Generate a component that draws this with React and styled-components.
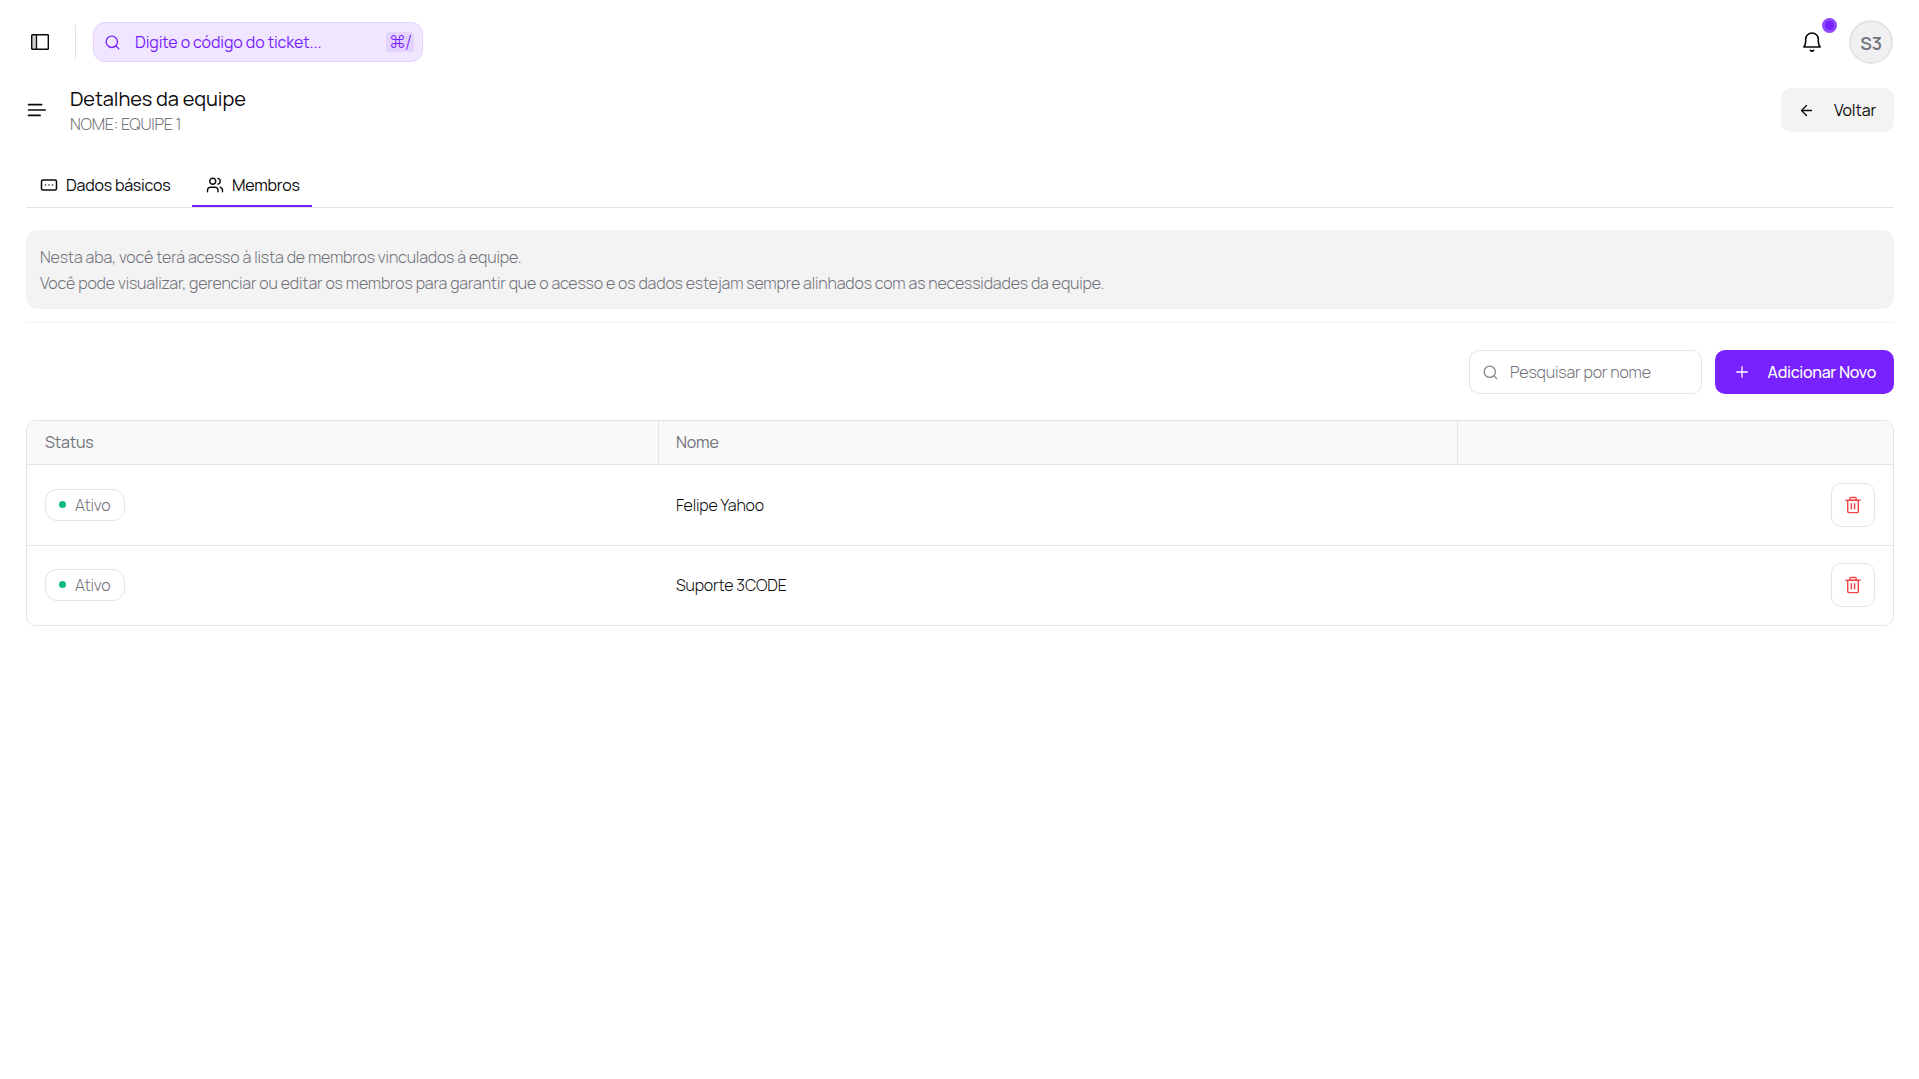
import React from 'react';
import styled, { createGlobalStyle } from 'styled-components';
import { Search, ArrowLeft, Plus, Users } from 'lucide-react';

const GlobalStyle = createGlobalStyle`
  * {
    box-sizing: border-box;
  }

  body {
    margin: 0;
    background-color: #fff;
    color: #0a0a0a;
    font-family: Manrope, Inter, sans-serif;
    font-size: 16px;
    line-height: 24px;
  }

  button, input {
    font: inherit;
    color: inherit;
  }

  svg {
    display: block;
    flex-shrink: 0;
  }
`;

const PageS = styled.div`
  min-height: 100vh;
  padding: 20px 25px 0 26px;
`;

const TopBarS = styled.header`
  display: flex;
  align-items: center;
  height: 44px;
`;

const SidebarToggleS = styled.button`
  display: flex;
  padding: 0;
  margin-left: 4px;
  border: none;
  background: none;
`;

const DividerS = styled.span`
  width: 1px;
  height: 35px;
  margin: 0 17px 0 25px;
  background-color: #e4e4e7;
`;

const TicketSearchS = styled.div`
  display: flex;
  align-items: center;
  gap: 14px;
  width: 330px;
  height: 40px;
  padding: 0 8px 0 10px;
  border: 1px solid #e4d3ff;
  border-radius: 12px;
  background-color: #f0e6ff;
  color: #7722ff;
`;

const TextS = styled.span`
  font-size: ${({ $size }) => $size || 16}px;
  font-weight: ${({ $weight }) => $weight || 400};
  letter-spacing: ${({ $spacing }) => $spacing || -0.16}px;
  white-space: nowrap;
`;

const ShortcutS = styled.kbd`
  display: flex;
  align-items: center;
  justify-content: center;
  width: 28px;
  height: 20px;
  padding-bottom: 1px;
  margin-left: auto;
  border-radius: 4px;
  background-color: #e4d3ff;
  font: 300 17px Inter, 'DejaVu Sans', sans-serif;
  letter-spacing: -0.5px;
`;

const BellButtonS = styled.button`
  position: relative;
  display: flex;
  padding: 0;
  margin: 0 26px 0 auto;
  border: none;
  background: none;
`;

const BellDotS = styled.span`
  position: absolute;
  top: -13px;
  right: -14px;
  display: flex;
  align-items: center;
  justify-content: center;
  width: 15px;
  height: 15px;
  border-radius: 50%;
  background-color: #8f47ff;

  &::after {
    content: '';
    width: 9px;
    height: 9px;
    border-radius: 50%;
    background-color: #7722ff;
  }
`;

const AvatarS = styled.div`
  display: flex;
  align-items: center;
  justify-content: center;
  width: 44px;
  height: 44px;
  padding-top: 1px;
  margin-right: 1px;
  border: 2px solid #e4e4e7;
  border-radius: 50%;
  background-color: #f0f0f2;
  color: #71717a;
`;

const PageHeaderS = styled.div`
  display: flex;
  align-items: center;
  height: 44px;
  margin-top: 24px;
`;

const HeadingS = styled.div`
  display: flex;
  flex-direction: column;
  padding-top: 1px;
  margin: 0 auto 0 23px;
`;

const TitleS = styled.h1`
  margin: 0;
  font-size: 20px;
  font-weight: 400;
  line-height: 27px;
  letter-spacing: -0.1px;
`;

const SubtitleS = styled.p`
  margin: 0;
  color: #71717a;
  font-size: 16px;
  font-weight: 300;
  line-height: 24px;
  letter-spacing: -0.24px;
`;

const ButtonS = styled.button`
  display: flex;
  align-items: center;
  justify-content: space-between;
  width: ${({ $width }) => $width}px;
  height: 44px;
  padding: 0 18px 0 ${({ $primary }) => ($primary ? 18 : 17)}px;
  border: none;
  border-radius: 10px;
  background-color: ${({ $primary }) => ($primary ? '#7722ff' : '#f3f3f3')};
  color: ${({ $primary }) => ($primary ? '#fff' : '#0a0a0a')};

  span {
    padding-bottom: 1px;
  }
`;

const TabsS = styled.nav`
  display: flex;
  height: 46px;
  margin-top: 30px;
  border-bottom: 1px solid #e4e4e7;
`;

const TabS = styled.button`
  display: flex;
  align-items: center;
  gap: 8px;
  width: ${({ $width }) => $width}px;
  height: 45px;
  padding: 2px 14px 0;
  margin-right: 8px;
  border: none;
  border-bottom: 2px solid ${({ $active }) => ($active ? '#7722ff' : 'transparent')};
  background: none;
`;

const InfoS = styled.section`
  display: flex;
  flex-direction: column;
  height: 79px;
  margin-top: 22px;
  padding: 14px;
  border-radius: 12px;
  background-color: #f3f3f3;
  color: #71717a;
  line-height: 26px;
`;

const SeparatorS = styled.div`
  height: 1px;
  margin-top: 13px;
  background-color: #f3f3f3;
`;

const ToolbarS = styled.div`
  display: flex;
  justify-content: flex-end;
  gap: 13px;
  margin-top: 27px;
`;

const NameSearchS = styled.label`
  display: flex;
  align-items: center;
  gap: 11px;
  width: 233px;
  height: 44px;
  padding: 0 12px;
  border: 1px solid #e4e4e7;
  border-radius: 10px;
  color: #85858d;
`;

const NameInputS = styled.input`
  width: 100%;
  padding: 0 0 1px;
  border: none;
  outline: none;
  background: none;
  font-size: 16px;
  font-weight: 300;
  letter-spacing: -0.16px;

  &::placeholder {
    color: #71717a;
    opacity: 1;
  }
`;

const TableS = styled.div`
  margin-top: 26px;
  border: 1px solid #e4e4e7;
  border-radius: 10px;
  overflow: hidden;
`;

const RowS = styled.div`
  display: grid;
  grid-template-columns: 632px 799px 1fr;
  height: ${({ $head }) => ($head ? 44 : 81)}px;
  border-bottom: 1px solid #e4e4e7;

  &:last-child {
    height: 79px;
    padding-bottom: 1px;
    border-bottom: none;
  }
`;

const CellS = styled.div`
  display: flex;
  align-items: center;
  justify-content: ${({ $end }) => ($end ? 'flex-end' : 'flex-start')};
  padding: 0 18px;

  & + & {
    padding-left: 17px;
  }

  > span {
    margin-bottom: 1px;
  }
`;

const HeadCellS = styled(CellS)`
  border-right: 1px solid #e4e4e7;
  background-color: #f9f9f9;
  color: #71717a;

  &:last-child {
    border-right: none;
  }
`;

const StatusS = styled.span`
  display: flex;
  align-items: center;
  gap: 9px;
  width: 80px;
  height: 32px;
  padding: 0 13px;
  border: 1px solid #e4e4e7;
  border-radius: 12px;
  color: #71717a;

  &::before {
    content: '';
    width: 7px;
    height: 7px;
    border-radius: 50%;
    background-color: #10b981;
  }
`;

const DeleteButtonS = styled.button`
  display: flex;
  align-items: center;
  justify-content: center;
  width: 44px;
  height: 44px;
  padding: 0;
  border: 1px solid #e4e4e7;
  border-radius: 10px;
  background-color: #fff;
  color: #ef4444;
`;

const members = ['Felipe Yahoo', 'Suporte 3CODE'];

const SidebarIcon = () => (
  <svg width="20" height="20" viewBox="0 0 20 20" fill="none">
    <path d="M2 3h5v14H2z" fill="#0a0a0a" opacity="0.2" />
    <rect x="1.7" y="2.7" width="16.6" height="14.6" rx="0.6" stroke="#0a0a0a" strokeWidth="1.4" />
    <path d="M6.5 3v14" stroke="#0a0a0a" strokeWidth="1.3" />
  </svg>
);

const BellIcon = () => (
  <svg width="22" height="22" viewBox="0 0 22 22" fill="none" stroke="#0a0a0a" strokeWidth="1.6" strokeLinecap="round" strokeLinejoin="round">
    <path d="M2.8 16h16.4c-1.5-1.7-1.9-3.3-1.9-5.4V8.2C17.3 4.7 14.5 2 11 2S4.7 4.7 4.7 8.2v2.4c0 2.1-.4 3.7-1.9 5.4Z" />
    <path d="M9.3 19.4c1 .8 2.4.8 3.4 0" />
  </svg>
);

const MenuIcon = () => (
  <svg width="21" height="20" viewBox="0 0 21 20" fill="none" stroke="#0a0a0a" strokeWidth="1.7" strokeLinecap="round">
    <path d="M2.6 4.7h13M2.6 10h16.6M2.6 15.4h11.5" />
  </svg>
);

const DataIcon = () => (
  <svg width="18" height="18" viewBox="0 0 18 18" fill="none" stroke="currentColor" strokeWidth="1.5" strokeLinecap="round">
    <rect x="1.5" y="4" width="15" height="10" rx="1.5" />
    <path d="M5.5 9h.01M9 9h.01M12.5 9h.01" />
  </svg>
);

const TrashIcon = () => (
  <svg width="18" height="18" viewBox="0 0 18 18" fill="none" stroke="currentColor" strokeWidth="1.4" strokeLinecap="round" strokeLinejoin="round">
    <path d="M5.8 4V2.4c0-.6.4-1 1-1h4.4c.6 0 1 .4 1 1V4" fill="currentColor" fillOpacity="0.2" />
    <path d="M2 4.2h14M3.7 4.2v11.4c0 .6.4 1 1 1h8.6c.6 0 1-.4 1-1V4.2M7.4 7.8v5M10.6 7.8v5" />
  </svg>
);

const App = () => (
  <>
    <GlobalStyle />
    <PageS>
      <TopBarS>
        <SidebarToggleS aria-label="Menu lateral"><SidebarIcon /></SidebarToggleS>
        <DividerS />
        <TicketSearchS>
          <Search size={17} strokeWidth={1.9} />
          <TextS $spacing={-0.1}>Digite o código do ticket...</TextS>
          <ShortcutS>⌘/</ShortcutS>
        </TicketSearchS>
        <BellButtonS aria-label="Notificações">
          <BellIcon />
          <BellDotS />
        </BellButtonS>
        <AvatarS><TextS $size={18} $weight={600}>S3</TextS></AvatarS>
      </TopBarS>

      <PageHeaderS>
        <MenuIcon />
        <HeadingS>
          <TitleS>Detalhes da equipe</TitleS>
          <SubtitleS>NOME: EQUIPE 1</SubtitleS>
        </HeadingS>
        <ButtonS $width={113}>
          <ArrowLeft size={17} strokeWidth={1.8} />
          <TextS>Voltar</TextS>
        </ButtonS>
      </PageHeaderS>

      <TabsS>
        <TabS $width={158}>
          <DataIcon />
          <TextS $spacing={-0.2}>Dados básicos</TextS>
        </TabS>
        <TabS $active $width={120}>
          <Users size={18} strokeWidth={1.9} />
          <TextS $spacing={-0.2}>Membros</TextS>
        </TabS>
      </TabsS>

      <InfoS>
        <TextS $weight={300}>Nesta aba, você terá acesso à lista de membros vinculados à equipe.</TextS>
        <TextS $weight={300}>
          Você pode visualizar, gerenciar ou editar os membros para garantir que o acesso e os dados estejam sempre alinhados com as necessidades da equipe.
        </TextS>
      </InfoS>
      <SeparatorS />

      <ToolbarS>
        <NameSearchS>
          <Search size={17} strokeWidth={1.8} />
          <NameInputS placeholder="Pesquisar por nome" />
        </NameSearchS>
        <ButtonS $primary $width={179}>
          <Plus size={18} strokeWidth={1.7} />
          <TextS $weight={500} $spacing={-0.27}>Adicionar Novo</TextS>
        </ButtonS>
      </ToolbarS>

      <TableS>
        <RowS $head>
          <HeadCellS><TextS>Status</TextS></HeadCellS>
          <HeadCellS><TextS>Nome</TextS></HeadCellS>
          <HeadCellS />
        </RowS>
        {members.map((name) => (
          <RowS key={name}>
            <CellS><StatusS><TextS $weight={300}>Ativo</TextS></StatusS></CellS>
            <CellS><TextS $weight={300}>{name}</TextS></CellS>
            <CellS $end>
              <DeleteButtonS aria-label="Remover membro"><TrashIcon /></DeleteButtonS>
            </CellS>
          </RowS>
        ))}
      </TableS>
    </PageS>
  </>
);

export default App;
